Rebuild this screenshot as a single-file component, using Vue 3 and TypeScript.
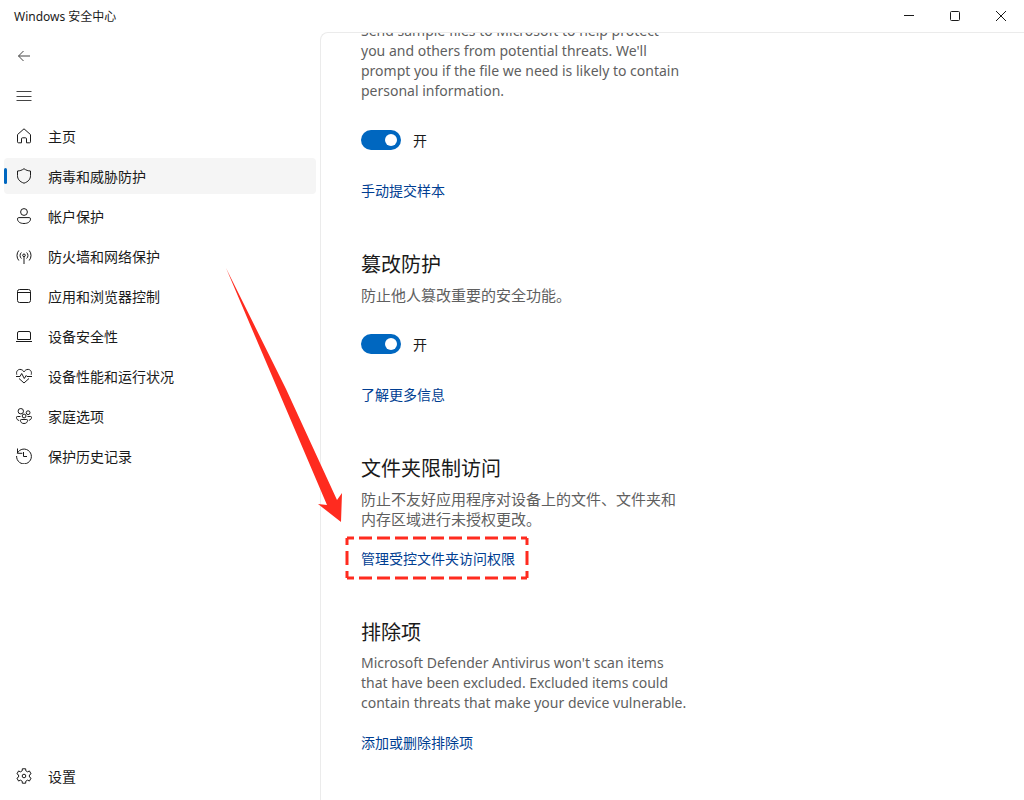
<script setup lang="ts">
import { ref } from 'vue'

interface NavItem {
  label: string
  paths: string[]
}

const navItems: NavItem[] = [
  { label: '主页', paths: ['M1.5 6.6 8 .8l6.5 5.8v7.2a1 1 0 0 1-1 1h-3v-4a1 1 0 0 0-1-1h-3a1 1 0 0 0-1 1v4h-3a1 1 0 0 1-1-1z'] },
  { label: '病毒和威胁防护', paths: ['M8 .7c2 1.5 4.1 2.2 6.5 2.3v4.6c0 3.6-2.2 6.1-6.5 7.6-4.3-1.500-6.500-4-6.500-7.600V3C3.900 2.900 6 2.200 8 .7z'] },
  { label: '帐户保护', paths: ['M11.400 4A3.400 3.400 0 1 1 4.600 4a3.400 3.400 0 0 1 6.800 0z', 'M2.800 9.600h10.400q1.300 0 1.300 1.300c0 2.800-2.600 4.600-6.500 4.600s-6.500-1.800-6.500-4.600q0-1.300 1.300-1.300z'] },
  {
    label: '防火墙和网络保护',
    paths: [
      'M8 8.500V16',
      'M9.300 7.300a1.300 1.300 0 1 1-2.600 0 1.300 1.300 0 0 1 2.600 0z',
      'M5.400 10.500a4 4 0 0 1 0-6M10.600 10.500a4 4 0 0 0 0-6',
      'M2.800 12.500a7.800 7.800 0 0 1 0-10M13.200 12.500a7.800 7.800 0 0 0 0-10',
    ],
  },
  { label: '应用和浏览器控制', paths: ['M3.500 1.500h9a2 2 0 0 1 2 2v9a2 2 0 0 1-2 2h-9a2 2 0 0 1-2-2v-9a2 2 0 0 1 2-2z', 'M1.500 4.500h13'] },
  { label: '设备安全性', paths: ['M3 3.500h10a1.500 1.500 0 0 1 1.500 1.500v6.500h-13V5A1.500 1.500 0 0 1 3 3.500z', 'M0 13.500h16'] },
  {
    label: '设备性能和运行状况',
    paths: [
      'M.8 6.700C-.2 3 2.100 1.400 4 1.400c1.700 0 3.100.9 4 2.500.9-1.600 2.300-2.500 4-2.500 1.900 0 4.200 1.600 3.200 5.300',
      'M0 8.500h4l1.700-3 2.600 5 1.900-3 .8 1h5',
      'M3 10.500l5 4.500 5-4.500',
    ],
  },
  {
    label: '家庭选项',
    paths: [
      'M7.500 3.200a2.700 2.700 0 1 1-5.400 0 2.700 2.700 0 0 1 5.400 0z',
      'M14 4.700a1.900 1.900 0 1 1-3.800 0 1.900 1.900 0 0 1 3.800 0z',
      'M10 8a1.900 1.900 0 1 1-3.800 0A1.900 1.900 0 0 1 10 8z',
      'M4.500 8.500H1.300q-.8 0-.8.8c0 1.800 1 2.900 2.700 3.200',
      'M11.500 8.500h3.200q.8 0 .8.800c0 1.600-.9 2.700-2.700 3',
      'M5.300 11.500h5.400q.8 0 .8.800c0 2-1.200 3.200-3.500 3.200s-3.500-1.200-3.500-3.200q0-.8.8-.8z',
    ],
  },
  { label: '保护历史记录', paths: ['M1.300 5.300A7.400 7.400 0 1 1 .6 8', 'M1.500.5v4.800h4.800', 'M7.500 4v4.500H11'] },
]

// Six rounded teeth spaced 60 degrees apart around the icon centre.
function gearPath(): string {
  const points: string[] = []
  for (let tooth = 0; tooth < 6; tooth++) {
    const corners = [[-19, 5.5], [-13, 7.4], [13, 7.4], [19, 5.5]]
    for (const [offset, radius] of corners) {
      const angle = ((tooth * 60 - 90 + offset) * Math.PI) / 180
      points.push(`${(8 + radius * Math.cos(angle)).toFixed(2)} ${(8 + radius * Math.sin(angle)).toFixed(2)}`)
    }
  }
  return `M${points.join('L')}z`
}

const gear = gearPath()
const active = ref(1)
const sampleOn = ref(true)
const tamperOn = ref(true)
</script>

<template>
  <div class="window">
    <header class="titlebar">
      <h1 class="title">Windows 安全中心</h1>
      <div class="controls">
        <button type="button" aria-label="最小化">
          <svg width="12" height="12" viewBox="0 0 12 12"><path d="M1 5.500h10" /></svg>
        </button>
        <button type="button" aria-label="最大化">
          <svg width="12" height="12" viewBox="0 0 12 12"><rect x="1.500" y="1.500" width="9" height="9" rx="1" /></svg>
        </button>
        <button type="button" aria-label="关闭">
          <svg width="12" height="12" viewBox="0 0 12 12"><path d="M1 1l10 10M11 1 1 11" /></svg>
        </button>
      </div>
    </header>

    <div class="body">
      <nav class="sidebar">
        <button type="button" class="nav-row" aria-label="返回">
          <svg class="icon muted" viewBox="0 0 16 16"><path d="M14 8H2.500M7.500 3l-5 5 5 5" /></svg>
        </button>
        <button type="button" class="nav-row" aria-label="导航菜单">
          <svg class="icon muted" viewBox="0 0 16 16"><path d="M.5 3.500h15M.5 8.500h15M.5 12.500h15" /></svg>
        </button>
        <button
          v-for="(item, index) in navItems"
          :key="item.label"
          type="button"
          class="nav-row"
          :class="{ active: index === active }"
          @click="active = index"
        >
          <svg class="icon" viewBox="0 0 16 16"><path v-for="d in item.paths" :key="d" :d="d" /></svg>
          <span>{{ item.label }}</span>
        </button>
        <button type="button" class="nav-row settings">
          <svg class="icon" viewBox="0 0 16 16"><path :d="gear" /><circle cx="8" cy="8" r="1.800" /></svg>
          <span>设置</span>
        </button>
      </nav>

      <main class="content">
        <section class="samples">
          <p>Send sample files to Microsoft to help protect you and others from potential threats. We'll prompt you if the file we need is likely to contain personal information.</p>
          <label class="switch"><input v-model="sampleOn" type="checkbox" /><span>{{ sampleOn ? '开' : '关' }}</span></label>
          <a href="#submit">手动提交样本</a>
        </section>
        <section>
          <h2>篡改防护</h2>
          <p lang="zh-CN">防止他人篡改重要的安全功能。</p>
          <label class="switch"><input v-model="tamperOn" type="checkbox" /><span>{{ tamperOn ? '开' : '关' }}</span></label>
          <a href="#more">了解更多信息</a>
        </section>
        <section>
          <h2>文件夹限制访问</h2>
          <p lang="zh-CN">防止不友好应用程序对设备上的文件、文件夹和内存区域进行未授权更改。</p>
          <a href="#folders" class="direct marked">
            管理受控文件夹访问权限
            <svg class="marker" width="184" height="44" viewBox="0 0 184 44">
              <path d="M2 2h180M2 42h180" stroke-dasharray="13 5" stroke-dashoffset="6" />
              <path d="M2 2v40M182 2v40" stroke-dasharray="14 6" stroke-dashoffset="7" />
            </svg>
          </a>
        </section>
        <section>
          <h2>排除项</h2>
          <p>Microsoft Defender Antivirus won't scan items that have been excluded. Excluded items could contain threats that make your device vulnerable.</p>
          <a href="#exclusions" class="direct">添加或删除排除项</a>
        </section>
      </main>
    </div>

    <svg class="arrow" width="118" height="256" viewBox="0 0 118 256">
      <path d="M0 0 60 121 111 232 116 225 115 254 92 236 101 237z" />
    </svg>
  </div>
</template>

<style>
body {
  margin: 0;
}
</style>

<style scoped>
.window {
  position: relative;
  display: flex;
  flex-direction: column;
  height: 100vh;
  overflow: hidden;
  background: #fff;
  color: #1a1a1a;
  font-family: "Noto Sans", "Noto Sans CJK SC", sans-serif;
  font-size: 14px;
  line-height: 20px;
}

.titlebar {
  display: flex;
  flex: none;
  align-items: center;
  justify-content: space-between;
  height: 32px;
  padding-left: 14px;
}

.title {
  margin: 0;
  padding-top: 2px;
  font-size: 12px;
  font-weight: 400;
}

.controls {
  display: flex;
}

button {
  padding: 0;
  border: 0;
  background: none;
  color: inherit;
  font: inherit;
}

.controls button {
  display: flex;
  align-items: center;
  justify-content: center;
  width: 46px;
  height: 32px;
}

svg {
  fill: none;
  stroke: currentColor;
}

.body {
  display: flex;
  flex: 1;
  min-height: 0;
}

.sidebar {
  display: flex;
  flex: none;
  flex-direction: column;
  gap: 4px;
  box-sizing: border-box;
  width: 320px;
  padding: 6px 4px;
}

.nav-row {
  display: flex;
  flex: none;
  align-items: center;
  gap: 16px;
  position: relative;
  height: 36px;
  padding-left: 12px;
  border-radius: 4px;
  text-align: left;
}

.nav-row span,
.switch span {
  padding-top: 2px;
}

.nav-row.active {
  background: #f5f5f5;
}

.nav-row.active::before {
  content: "";
  position: absolute;
  left: 0;
  width: 3px;
  height: 16px;
  border-radius: 2px;
  background: #0067c0;
}

.settings {
  margin-top: auto;
}

.icon {
  width: 16px;
  height: 16px;
  stroke-linejoin: round;
}

.muted {
  color: #444;
}

.content {
  flex: 1;
  min-width: 0;
  overflow: hidden;
  padding-left: 40px;
  border-top: 1px solid #ebebeb;
  border-left: 1px solid #ebebeb;
  border-top-left-radius: 8px;
}

section {
  display: flex;
  flex-direction: column;
  align-items: flex-start;
  max-width: 328px;
  margin-bottom: 49px;
}

.samples {
  max-width: 324px;
  margin-top: -12px;
}

h2 {
  margin: 0 0 5px;
  font-size: 20px;
  font-weight: 400;
  line-height: 30px;
}

p {
  margin: 0;
  color: #5f5f5f;
}

p:lang(zh) {
  font-size: 15px;
}

.switch {
  display: flex;
  align-items: center;
  gap: 12px;
  height: 20px;
  margin: 29px 0 31px;
}

.switch input {
  appearance: none;
  display: flex;
  align-items: center;
  justify-content: flex-start;
  box-sizing: border-box;
  width: 40px;
  height: 20px;
  margin: 0;
  padding: 0 4px;
  border-radius: 10px;
  background: #8a8a8a;
}

.switch input:checked {
  justify-content: flex-end;
  background: #0067c0;
}

.switch input::before {
  content: "";
  width: 12px;
  height: 12px;
  border-radius: 50%;
  background: #fff;
}

a {
  color: #003e92;
  text-decoration: none;
}

.direct {
  margin-top: 20px;
}

.marked {
  position: relative;
}

.marker {
  position: absolute;
  top: -13px;
  left: -16px;
  color: #ff2b1f;
  stroke-width: 3;
  stroke-linecap: butt;
  pointer-events: none;
}

.arrow {
  position: absolute;
  top: 268px;
  left: 226px;
  pointer-events: none;
}

.arrow path {
  fill: #ff2b1f;
  stroke: none;
}
</style>
